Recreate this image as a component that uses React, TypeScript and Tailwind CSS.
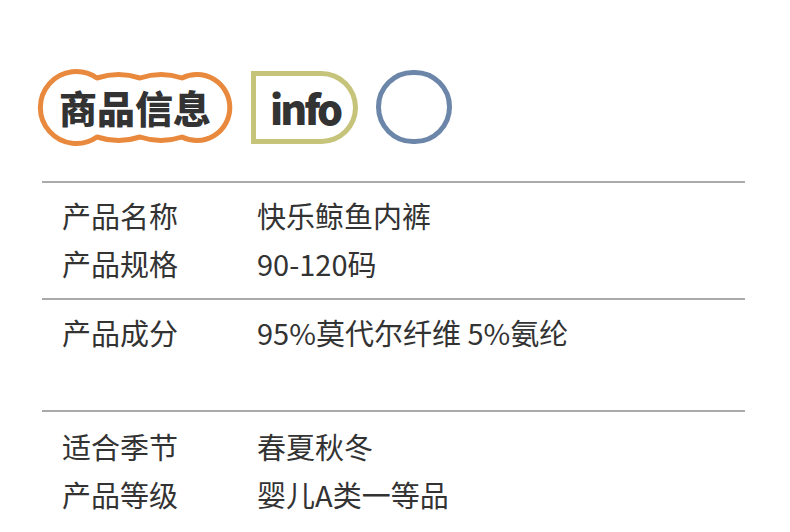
const rows1 = [
  { label: "产品名称", value: "快乐鲸鱼内裤" },
  { label: "产品规格", value: "90-120码" },
];
const rows3 = [
  { label: "适合季节", value: "春夏秋冬" },
  { label: "产品等级", value: "婴儿A类一等品" },
];

const Row = ({ label, value }: { label: string; value: string }) => (
  <div className="flex h-[48px] items-center">
    <div className="w-[215px] pl-[20px]">{label}</div>
    <div>{value}</div>
  </div>
);

const Cloud = () => (
  <div className="relative flex h-[73px] w-[196px] items-center justify-center">
    <svg
      className="absolute inset-0 overflow-visible"
      width="196"
      height="73"
      viewBox="0 0 196 73"
      fill="none"
    >
      <path
        d="M60 7 Q81.5 0 103 7 Q124 0 145 7 A33 33 0 1 1 145 66 Q124 73 103 66 Q81.5 73 60 66 A36 36 0 1 1 60 7 Z"
        stroke="#e9893d"
        strokeWidth="5"
        strokeLinejoin="round"
      />
    </svg>
    <span className="relative text-[38px] font-black leading-none text-[#333]">商品信息</span>
  </div>
);

export default function App() {
  return (
    <div
      className="h-[532px] w-[790px] overflow-hidden bg-white text-[#333]"
      style={{ fontFamily: '"Noto Sans CJK SC", "Noto Sans", sans-serif' }}
    >
      <div className="flex items-center gap-[18px] pl-[37px] pt-[70px]">
        <Cloud />
        <div className="flex h-[73px] w-[107px] items-center rounded-l-[12px] rounded-r-full border-[5px] border-[#c6c37b] pl-[14px]">
          <span className="text-[41px] font-black leading-none tracking-[-3px] text-[#333]">info</span>
        </div>
        <div className="h-[74px] w-[76px] rounded-full border-[5px] border-[#6c86aa]" />
      </div>

      <div className="ml-[42px] mt-[37px] w-[703px] text-[29px] leading-none">
        <div className="h-[2px] bg-[#aaa]" />
        <div className="pb-[11px] pt-[8px]">
          {rows1.map((r) => (
            <Row key={r.label} {...r} />
          ))}
        </div>
        <div className="h-[2px] bg-[#aaa]" />
        <div className="pb-[54px] pt-[8px]">
          <Row label="产品成分" value="95%莫代尔纤维 5%氨纶" />
        </div>
        <div className="h-[2px] bg-[#aaa]" />
        <div className="pt-[10px]">
          {rows3.map((r) => (
            <Row key={r.label} {...r} />
          ))}
        </div>
      </div>
    </div>
  );
}
